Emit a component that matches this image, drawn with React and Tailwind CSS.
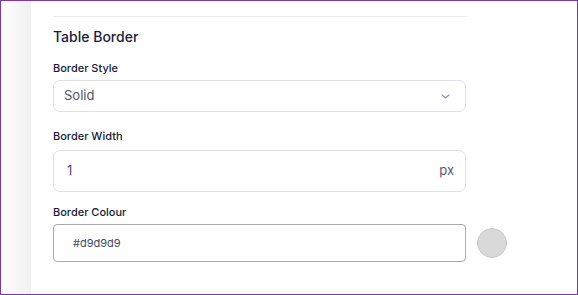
import React from "react";

const Label = ({ children, className = "" }) => (
  <div className={`text-[11px] leading-4 font-medium text-[#151a3c] ${className}`}>
    {children}
  </div>
);

const App = () => {
  return (
    <div className="w-[578px] h-[295px] border border-[#7a35b0] bg-white flex overflow-hidden font-['Inter',sans-serif]">
      {/* panel shadow */}
      <div className="w-[30px] shrink-0 bg-gradient-to-r from-[#fdfdfd] to-[#f1f1f1]" />

      <div className="flex flex-col pl-[22px]">
        <div className="mt-[15px] h-px w-[413px] bg-[#ededf1]" />

        <div className="mt-[10px] text-[14px] leading-5 font-medium text-[#1b1d3d]">
          Table Border
        </div>

        {/* Border Style */}
        <Label className="mt-[13px]">Border Style</Label>
        <div className="mt-[4px] w-[413px] h-[32px] rounded-[7px] border border-[#dde0ec] px-[10px] flex items-center justify-between">
          <span className="text-[13px] text-[#4c5267]">Solid</span>
          <svg width="9" height="5" viewBox="0 0 9 5" className="mr-[5px]">
            <path
              d="M1 0.8L4.5 4L8 0.8"
              fill="none"
              stroke="#8a8fa6"
              strokeWidth="1.1"
              strokeLinecap="round"
              strokeLinejoin="round"
            />
          </svg>
        </div>

        {/* Border Width */}
        <Label className="mt-[16px]">Border Width</Label>
        <div className="mt-[6px] w-[413px] h-[42px] rounded-[7px] border border-[#dde0ec] pl-[13px] pr-[11px] flex items-center justify-between">
          <span className="text-[13px] text-[#57496f]">1</span>
          <span className="text-[13px] text-[#565c73]">px</span>
        </div>

        {/* Border Colour */}
        <Label className="mt-[12px]">Border Colour</Label>
        <div className="mt-[4px] flex items-center gap-[11px]">
          <div className="w-[413px] h-[38px] rounded-[4px] border border-[#a9a9b2] pl-[19px] flex items-center">
            <span className="text-[11px] text-[#3f4a5e]">#d9d9d9</span>
          </div>
          <div className="w-[30px] h-[30px] rounded-full bg-[#d9d9d9] border border-[#cacaca]" />
        </div>
      </div>
    </div>
  );
};

export default App;
